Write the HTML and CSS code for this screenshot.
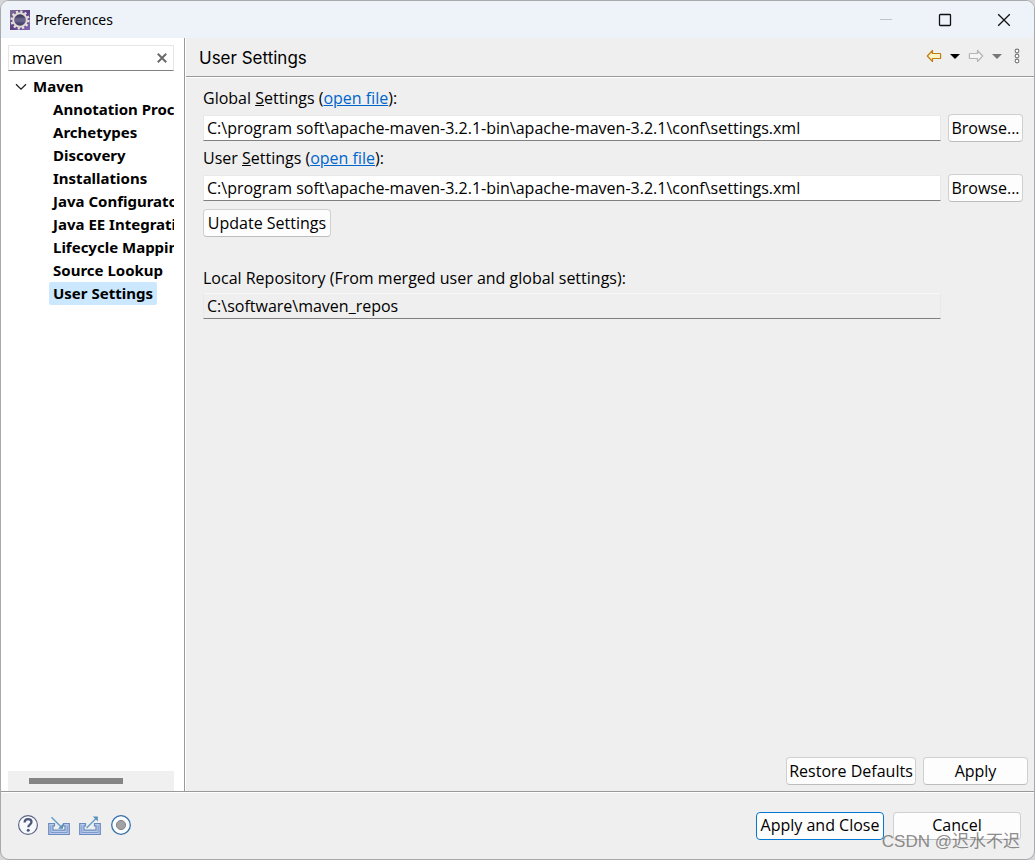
FILE: index.html
```html
<!DOCTYPE html>
<html lang="en">
<head>
<meta charset="utf-8">
<title>Preferences</title>
<link rel="stylesheet" href="styles.css">
</head>
<body>
<div class="window">
  <header class="titlebar">
    <svg class="app-icon" width="20" height="20" viewBox="0 0 20 20" aria-hidden="true">
      <defs>
        <linearGradient id="tile" x1="0" y1="0" x2="1" y2="1"><stop offset="0" stop-color="#7d7098"/><stop offset=".5" stop-color="#5b3f86"/><stop offset="1" stop-color="#8468b4"/></linearGradient>
        <linearGradient id="orb" x1="0" y1="0" x2="0" y2="1"><stop offset="0" stop-color="#2f2b50"/><stop offset=".5" stop-color="#625f85"/><stop offset="1" stop-color="#3a3360"/></linearGradient>
      </defs>
      <rect width="20" height="20" fill="url(#tile)"/>
      <circle cx="10" cy="10" r="8.400" fill="none" stroke="#e6e2dc" stroke-width="2.400" stroke-dasharray="2.200 2.200"/>
      <circle cx="10" cy="10" r="6.800" fill="url(#orb)" stroke="#dedad6" stroke-width="2"/>
      <path d="M4.500 9h11M4.500 11h11" stroke="#85819f" stroke-width=".6"/>
    </svg>
    <h1 class="title">Preferences</h1>
    <div class="window-controls">
      <button class="window-button" aria-label="Minimize" disabled><svg width="14" height="14" viewBox="0 0 14 14"><path d="M1 6.500h12" stroke="#bfc3c6"/></svg></button>
      <button class="window-button" aria-label="Maximize"><svg width="14" height="14" viewBox="0 0 14 14"><rect x="1.500" y="1.500" width="11" height="11" rx=".8" fill="none" stroke="#111" stroke-width="1.300"/></svg></button>
      <button class="window-button" aria-label="Close"><svg width="14" height="14" viewBox="0 0 14 14"><path d="M1.200 1.200l11.600 11.600M12.800 1.200L1.200 12.800" stroke="#111" stroke-width="1.300"/></svg></button>
    </div>
  </header>

  <div class="content">
    <aside class="sidebar">
      <div class="filter">
        <input class="filter-input" type="text" value="maven" aria-label="Filter preferences">
        <button class="clear" aria-label="Clear"><svg width="10" height="10" viewBox="0 0 10 10"><path d="M.8.8l8.400 8.400M9.200.8L.8 9.200" stroke="#6a6a6a" stroke-width="2"/></svg></button>
      </div>
      <nav class="tree" aria-label="Preference pages">
        <div class="tree-root">
          <svg width="12" height="8" viewBox="0 0 12 8" aria-hidden="true"><path d="M1 1.200l5 5 5-5" fill="none" stroke="#222" stroke-width="1.300"/></svg>
          <span>Maven</span>
        </div>
        <ul class="tree-list">
          <li><span class="tree-item">Annotation Processing</span></li>
          <li><span class="tree-item">Archetypes</span></li>
          <li><span class="tree-item">Discovery</span></li>
          <li><span class="tree-item">Installations</span></li>
          <li><span class="tree-item">Java Configurator</span></li>
          <li><span class="tree-item">Java EE Integration</span></li>
          <li><span class="tree-item">Lifecycle Mappings</span></li>
          <li><span class="tree-item">Source Lookup</span></li>
          <li><span class="tree-item selected">User Settings</span></li>
        </ul>
      </nav>
      <div class="scrollbar"><div class="thumb"></div></div>
    </aside>

    <main class="page">
      <div class="page-header">
        <h2 class="page-title">User Settings</h2>
        <div class="toolbar">
          <button class="tool" aria-label="Back"><svg width="16" height="14" viewBox="0 0 16 14"><path d="M1.300 7L6.500 1.500v3H14a.6.6 0 0 1 .6.6v3.800a.6.6 0 0 1-.6.6H6.500v3z" fill="#fff3c4" stroke="#bd7f14" stroke-width="1.200" stroke-linejoin="round"/></svg></button>
          <button class="tool" aria-label="Back history"><svg width="10" height="5" viewBox="0 0 10 5"><path d="M0 0h10L5 5z" fill="#000"/></svg></button>
          <button class="tool" aria-label="Forward"><svg width="16" height="14" viewBox="0 0 16 14"><path d="M14.700 7L9.500 1.500v3H2a.6.6 0 0 0-.6.6v3.800a.6.6 0 0 0 .6.6h7.500v3z" fill="#f4f4f4" stroke="#b5b5b5" stroke-width="1.200" stroke-linejoin="round"/></svg></button>
          <button class="tool" aria-label="Forward history"><svg width="10" height="5" viewBox="0 0 10 5"><path d="M0 0h10L5 5z" fill="#777"/></svg></button>
          <button class="tool menu" aria-label="View menu"><svg width="6" height="16" viewBox="0 0 6 16"><g fill="#fff" stroke="#777" stroke-width="1.100"><circle cx="3" cy="3" r="1.900"/><circle cx="3" cy="8" r="1.900"/><circle cx="3" cy="13" r="1.900"/></g></svg></button>
        </div>
      </div>

      <form class="form">
        <div class="label"><label for="global">Global <u>S</u>ettings</label> (<a href="#global">open file</a>):</div>
        <input class="field" id="global" type="text" value="C:\program soft\apache-maven-3.2.1-bin\apache-maven-3.2.1\conf\settings.xml">
        <button class="button" type="button">Browse...</button>
        <div class="label"><label for="user">User <u>S</u>ettings</label> (<a href="#user">open file</a>):</div>
        <input class="field" id="user" type="text" value="C:\program soft\apache-maven-3.2.1-bin\apache-maven-3.2.1\conf\settings.xml">
        <button class="button" type="button">Browse...</button>
        <button class="button update" type="button">Update Settings</button>
        <label class="label repository" for="repo">Local Repository (From merged user and global settings):</label>
        <input class="field" id="repo" type="text" readonly value="C:\software\maven_repos">
      </form>

      <div class="page-actions">
        <button class="button restore">Restore Defaults</button>
        <button class="button apply">Apply</button>
      </div>
    </main>
  </div>

  <footer class="footer">
    <div class="footer-icons">
      <button class="tool" aria-label="Help"><svg width="22" height="22" viewBox="0 0 22 22"><circle cx="11" cy="11" r="9.400" fill="#f8f9fc" stroke="#5c6785" stroke-width="1.200"/><path d="M7.600 8.500C7.700 6.200 9 5.200 11.100 5.200c2 0 3.400 1.100 3.400 2.800 0 2.700-3.200 2.600-3.200 5.200" fill="none" stroke="#4b587c" stroke-width="2.300"/><circle cx="11.200" cy="16.300" r="1.500" fill="#4b587c"/></svg></button>
      <button class="tool" aria-label="Import"><svg width="22" height="22" viewBox="0 0 22 22"><path d="M.7 9.500h5.800v2.300H5v4.400h12v-4.400h-1.500V9.500h5.800v11H.7z" fill="#b9cbe8" stroke="#6b8bc0" stroke-width="1.200"/><path d="M2.800 11.500v7h16.400v-7" fill="none" stroke="#7c9acb"/><path d="M3.500 3.300l10 10" stroke="#63a0c8" stroke-width="1.500"/><path d="M15 9.700v5h-5z" fill="#5792ba"/></svg></button>
      <button class="tool" aria-label="Export"><svg width="22" height="22" viewBox="0 0 22 22"><path d="M.7 9.500h5.800v2.300H5v4.400h12v-4.400h-1.500V9.500h5.800v11H.7z" fill="#b9cbe8" stroke="#6b8bc0" stroke-width="1.200"/><path d="M2.800 11.500v7h16.400v-7" fill="none" stroke="#7c9acb"/><path d="M7.500 14L17.500 4" stroke="#63a0c8" stroke-width="1.500"/><path d="M13.800 2.500h5v5z" fill="#5792ba"/></svg></button>
      <button class="tool" aria-label="Oomph recorder"><svg width="22" height="22" viewBox="0 0 22 22"><circle cx="11" cy="11" r="9.300" fill="#fafcff" stroke="#3670a8" stroke-width="1.300"/><circle cx="11" cy="11" r="4.600" fill="#a2a2a2" stroke="#858585"/></svg></button>
    </div>
    <div class="footer-actions">
      <button class="button primary">Apply and Close</button>
      <button class="button">Cancel</button>
    </div>
  </footer>
  <div class="watermark">CSDN @迟水不迟</div>
</div>
</body>
</html>
```

FILE: styles.css
```css
* {
  box-sizing: border-box;
}

body {
  margin: 0;
  background: #d4d6d8;
  color: #000;
  font: 16px/23px "Open Sans", "Noto Sans", sans-serif;
}

button,
input {
  font: inherit;
  color: inherit;
}

button {
  padding: 0;
}

svg {
  display: block;
}

.window {
  position: relative;
  display: flex;
  flex-direction: column;
  min-height: 100vh;
  overflow: hidden;
  border: 1px solid #a8a9ab;
  border-radius: 9px;
  background: #efefef;
}

.titlebar {
  display: flex;
  align-items: center;
  height: 37px;
  padding: 0 1px 0 9px;
  background: #eef3f9;
}

.title {
  flex: 1;
  margin: 0 0 0 5px;
  font-family: "Noto Sans", sans-serif;
  font-size: 14px;
  font-weight: 400;
}

.window-controls {
  display: flex;
}

.window-button {
  display: grid;
  place-items: center;
  width: 59px;
  height: 37px;
  border: 0;
  background: none;
}

.content {
  display: flex;
  flex: 1;
}

.sidebar {
  display: flex;
  flex-direction: column;
  width: 184px;
  padding: 7px 10px 0 7px;
  border-right: 1px solid #999;
  background: #fff;
}

.filter {
  display: flex;
  align-items: center;
  height: 26px;
  padding-right: 6px;
  border: 1px solid #e5e5e5;
  border-bottom-color: #808080;
}

.filter-input {
  flex: 1;
  min-width: 0;
  height: 24px;
  padding: 0 3px;
  border: 0;
  background: none;
}

.clear {
  border: 0;
  background: none;
}

.tree {
  flex: 1;
  padding-top: 4px;
  overflow: hidden;
  font-family: "Noto Sans", sans-serif;
  font-size: 15px;
  font-weight: 700;
}

.tree-root {
  display: flex;
  align-items: center;
  gap: 6px;
  padding-left: 7px;
}

.tree-list {
  margin: 0;
  padding: 0 0 0 41px;
  list-style: none;
  white-space: nowrap;
}

.tree-item {
  display: inline-block;
  padding: 0 4px;
  border-radius: 2px;
  vertical-align: top;
}

.selected {
  background: #cce8ff;
}

.scrollbar {
  height: 20px;
  padding: 7px 51px 0 21px;
  background: #f0f0f0;
}

.thumb {
  height: 6px;
  background: #858585;
}

.page {
  display: flex;
  flex: 1;
  flex-direction: column;
  min-width: 0;
  border-left: 1px solid #fff;
}

.page-header {
  display: flex;
  align-items: center;
  justify-content: space-between;
  height: 39px;
  padding: 0 14px 0 13px;
  border-bottom: 1px solid #999;
  box-shadow: 0 1px #fff;
}

.page-title {
  margin: 0;
  padding-top: 2px;
  font-family: Inter, sans-serif;
  font-size: 17px;
  font-weight: 400;
}

.toolbar {
  display: flex;
  align-items: center;
  gap: 8px;
  padding-bottom: 2px;
}

.tool {
  border: 0;
  background: none;
}

.menu {
  margin-left: 4px;
}

.form {
  display: grid;
  grid-template-columns: 1fr 75px;
  gap: 2px 7px;
  align-items: center;
  padding: 7px 11px 0 17px;
}

.label {
  grid-column: 1 / -1;
  line-height: 28px;
}

.label a {
  color: #0066cc;
}

.field {
  min-width: 0;
  height: 26px;
  padding: 0 3px;
  border: 1px solid #e8e8e8;
  border-bottom-color: #808080;
  background: #fff;
}

.field:read-only {
  border-color: #f8f8f8 #e8e8e8 #808080;
  background: #efefef;
}

.button {
  height: 28px;
  border: 1px solid #d0d0d0;
  border-bottom-color: #bdbdbd;
  border-radius: 4px;
  background: #fdfdfd;
  white-space: nowrap;
}

.update {
  grid-column: 1 / -1;
  justify-self: start;
  width: 128px;
  margin-top: 5px;
}

.repository {
  margin-top: 26px;
  line-height: 26px;
}

.page-actions {
  display: flex;
  justify-content: flex-end;
  gap: 7px;
  margin-top: auto;
  padding: 0 6px 6px;
}

.restore {
  width: 130px;
}

.apply {
  width: 105px;
}

.footer {
  display: flex;
  align-items: center;
  justify-content: space-between;
  height: 68px;
  padding: 0 13px 0 16px;
  border-top: 1px solid #999;
  box-shadow: inset 0 1px #fff;
}

.footer-icons {
  display: flex;
  gap: 9px;
  padding-bottom: 2px;
}

.footer-actions {
  display: flex;
  gap: 9px;
}

.footer-actions .button {
  width: 128px;
}

.footer-actions .primary {
  border-color: #0078d4;
}

.watermark {
  position: absolute;
  right: 14px;
  bottom: 5px;
  color: rgba(110, 110, 110, 0.8);
  font: 17px/24px "Liberation Sans", "Noto Sans CJK SC", sans-serif;
  pointer-events: none;
}
```
